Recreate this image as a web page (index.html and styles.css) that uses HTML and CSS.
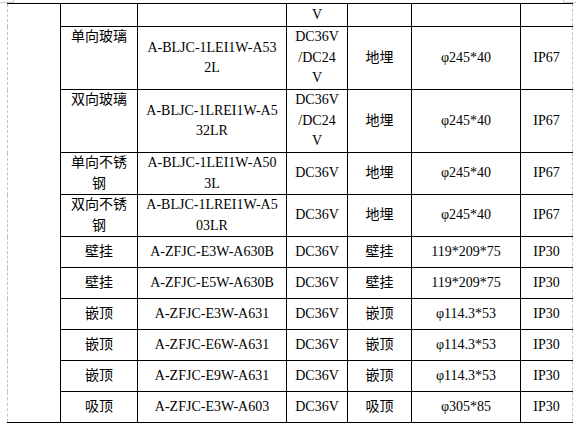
FILE: index.html
```html
<!DOCTYPE html>
<html lang="zh-CN">
<head>
<meta charset="utf-8">
<title>灯具参数表</title>
<link rel="stylesheet" href="styles.css">
</head>
<body>
<div class="page">
  <table class="spec">
    <colgroup>
      <col class="c0"><col class="c1"><col class="c2"><col class="c3"><col class="c4"><col class="c5"><col class="c6">
    </colgroup>
    <tbody>
      <tr class="h23">
        <td class="side" rowspan="11"></td>
        <td></td><td></td><td>V</td><td></td><td></td><td class="last"></td>
      </tr>
      <tr class="h63">
        <td class="top">单向玻璃</td><td>A-BLJC-1LEI1W-A532L</td><td>DC36V<br>/DC24<br>V</td><td>地埋</td><td>φ245*40</td><td class="last">IP67</td>
      </tr>
      <tr class="h63">
        <td class="top">双向玻璃</td><td>A-BLJC-1LREI1W-A532LR</td><td>DC36V<br>/DC24<br>V</td><td>地埋</td><td>φ245*40</td><td class="last">IP67</td>
      </tr>
      <tr class="h42">
        <td>单向不锈钢</td><td>A-BLJC-1LEI1W-A503L</td><td>DC36V</td><td>地埋</td><td>φ245*40</td><td class="last">IP67</td>
      </tr>
      <tr class="h42">
        <td>双向不锈钢</td><td>A-BLJC-1LREI1W-A503LR</td><td>DC36V</td><td>地埋</td><td>φ245*40</td><td class="last">IP67</td>
      </tr>
      <tr class="h31">
        <td>壁挂</td><td>A-ZFJC-E3W-A630B</td><td>DC36V</td><td>壁挂</td><td>119*209*75</td><td class="last">IP30</td>
      </tr>
      <tr class="h31">
        <td>壁挂</td><td>A-ZFJC-E5W-A630B</td><td>DC36V</td><td>壁挂</td><td>119*209*75</td><td class="last">IP30</td>
      </tr>
      <tr class="h31">
        <td>嵌顶</td><td>A-ZFJC-E3W-A631</td><td>DC36V</td><td>嵌顶</td><td>φ114.3*53</td><td class="last">IP30</td>
      </tr>
      <tr class="h31">
        <td>嵌顶</td><td>A-ZFJC-E6W-A631</td><td>DC36V</td><td>嵌顶</td><td>φ114.3*53</td><td class="last">IP30</td>
      </tr>
      <tr class="h31">
        <td>嵌顶</td><td>A-ZFJC-E9W-A631</td><td>DC36V</td><td>嵌顶</td><td>φ114.3*53</td><td class="last">IP30</td>
      </tr>
      <tr class="h31">
        <td>吸顶</td><td>A-ZFJC-E3W-A603</td><td>DC36V</td><td>吸顶</td><td>φ305*85</td><td class="last">IP30</td>
      </tr>
    </tbody>
  </table>
</div>
</body>
</html>
```

FILE: styles.css
```css
html, body {
  margin: 0;
  padding: 0;
  background: #ffffff;
}

.page {
  position: relative;
  width: 576px;
  height: 428px;
  padding: 3px 0 0 7px;
  box-sizing: border-box;
  overflow: hidden;
}

/* Word text-boundary corner marks */
.page::before,
.page::after {
  content: "";
  position: absolute;
  top: 0;
  height: 2px;
  border-bottom: 1px solid #c8c8c8;
}
.page::before {
  left: 0;
  width: 13px;
  border-right: 1px solid #c8c8c8;
}
.page::after {
  left: 563px;
  width: 13px;
  border-left: 1px solid #c8c8c8;
}

.spec {
  border-collapse: collapse;
  table-layout: fixed;
  width: 565px;
  font-family: "Liberation Serif", "Noto Sans CJK SC", serif;
  font-size: 14px;
  line-height: 20.5px;
  color: #000000;
}

.c0 { width: 53px; }
.c1 { width: 77px; }
.c2 { width: 149px; }
.c3 { width: 61px; }
.c4 { width: 64px; }
.c5 { width: 109px; }
.c6 { width: 52px; }

.spec td {
  border: 1px solid #000000;
  padding: 0 7px;
  text-align: center;
  vertical-align: middle;
  word-break: break-all;
  overflow-wrap: anywhere;
}

.spec td.side {
  border-left: 1px dashed #c4c4c4;
}

.spec td.last {
  border-right: 1px dashed #c4c4c4;
}

.spec td.top {
  vertical-align: top;
}

.h23 { height: 23px; }
.h63 { height: 63px; }
.h42 { height: 42px; }
.h31 { height: 31px; }
```
